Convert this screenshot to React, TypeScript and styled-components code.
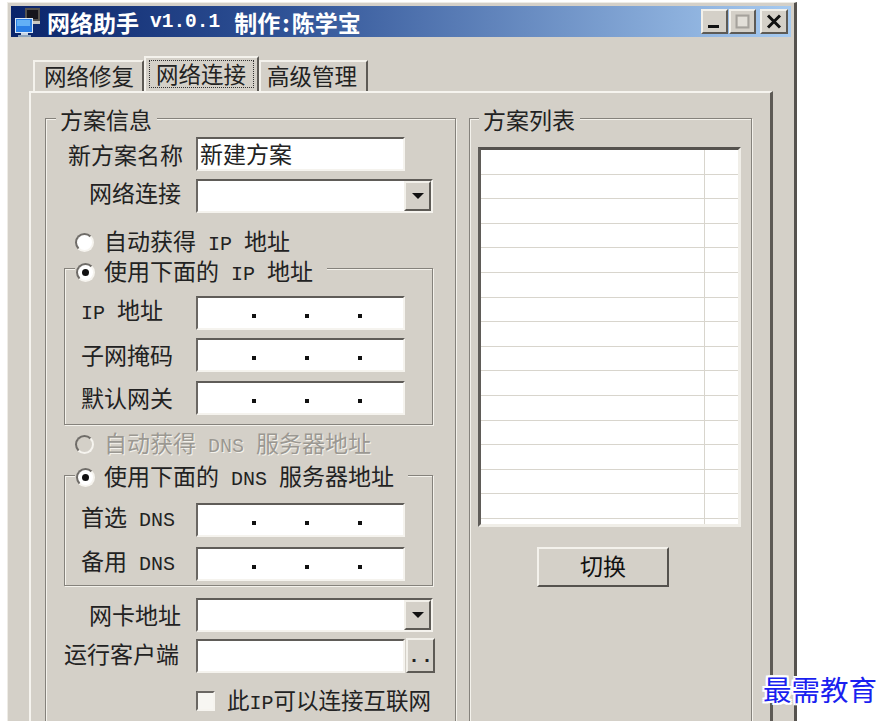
import React from "react";
import styled, { createGlobalStyle } from "styled-components";

const cjk = `"Noto Sans CJK SC", "Noto Sans", sans-serif`;
const mono = `"Liberation Mono", "Noto Sans CJK SC", monospace`;
const face = "#d4d0c8";

const Global = createGlobalStyle`
  html, body { margin: 0; padding: 0; background: #fff; overflow: hidden; }
  #root { height: 721px; overflow: hidden; position: relative; }
`;

const Window = styled.div`
  box-sizing: border-box;
  margin: 2px 0 0 7px;
  width: 790px;
  height: 740px;
  padding: 3px 3px 0 3px;
  background: ${face};
  border-top: 1px solid #eeece6;
  border-left: 1px solid #eeece6;
  border-right: 3px solid #55524e;
  font-family: ${cjk};
  font-size: 23px;
  line-height: 30px;
  color: #222;
`;

const TitleBar = styled.div`
  height: 31px;
  display: flex;
  align-items: center;
  padding: 0 3px 0 4px;
  background: linear-gradient(90deg, #0a246a 0%, #2f5296 35%, #a6caf0 100%);
  color: #fff;
  font-weight: 700;
`;

const IconSvg = styled.svg`
  flex: none;
  margin-top: 2px;
`;

const TitleText = styled.span`
  margin-left: 6px;
  display: flex;
  align-items: center;
  white-space: nowrap;
  line-height: 30px;
`;

const Version = styled.span`
  font-family: ${mono};
  font-size: 19.5px;
  margin: 0 14px 0 11px;
`;

const Colon = styled.span`
  margin: 0 2px;
`;

const TitleButtons = styled.div`
  margin-left: auto;
  display: flex;
  align-items: center;
`;

const CaptionButton = styled.div<{ $gap?: number; $w: number }>`
  box-sizing: border-box;
  width: ${(p) => p.$w}px;
  height: 25px;
  margin-left: ${(p) => p.$gap ?? 0}px;
  display: flex;
  align-items: center;
  justify-content: center;
  background: ${face};
  border: 2px solid;
  border-color: #f2f0ea #5d5a55 #5d5a55 #f2f0ea;
`;

const Tabs = styled.div`
  margin: 19px 0 0 22px;
  display: flex;
  align-items: flex-end;
  height: 35px;
  font-size: 22.5px;
`;

const Tab = styled.div<{ $w: number; $pad: number }>`
  box-sizing: border-box;
  height: 31px;
  width: ${(p) => p.$w}px;
  padding-left: ${(p) => p.$pad}px;
  background: ${face};
  border-top: 2px solid #f4f2ec;
  border-left: 2px solid #f4f2ec;
  border-right: 2px solid #5d5a55;
  line-height: 27px;
  white-space: nowrap;
`;

const ActiveTab = styled.div`
  box-sizing: border-box;
  height: 35px;
  width: 115px;
  padding: 2px 3px 3px 3px;
  background: ${face};
  border-top: 2px solid #f4f2ec;
  border-left: 2px solid #f4f2ec;
  border-right: 2px solid #5d5a55;
  white-space: nowrap;
`;

const TabFocus = styled.div`
  box-sizing: border-box;
  height: 100%;
  padding-left: 6px;
  border: 1px dotted #333;
  line-height: 24px;
`;

const Pane = styled.div`
  box-sizing: border-box;
  margin-left: 18px;
  width: 744px;
  height: 660px;
  padding: 25px 18px 0 14px;
  display: flex;
  gap: 13px;
  align-items: stretch;
  border-top: 2px solid #f6f4ef;
  border-left: 2px solid #f6f4ef;
  border-right: 3px solid #5d5a55;
`;

const Group = styled.div<{ $width?: number }>`
  box-sizing: border-box;
  flex: none;
  width: ${(p) => p.$width}px;
  height: 640px;
  border: 1px solid #85827c;
  box-shadow: 1px 1px 0 #f4f2ec, inset 1px 1px 0 #f4f2ec;
`;

const Legend = styled.div<{ $left: number }>`
  width: fit-content;
  height: 30px;
  line-height: 30px;
  margin: -15px 0 0 ${(p) => p.$left}px;
  padding: 0 5px 0 4px;
  background: ${face};
`;

const Row = styled.div<{ $top: number }>`
  display: flex;
  align-items: center;
  margin-top: ${(p) => p.$top}px;
`;

const RightLabel = styled.div<{ $trim?: number; $lift?: number }>`
  box-sizing: border-box;
  width: 150px;
  padding-right: ${(p) => 13 + (p.$trim ?? 0)}px;
  text-align: right;
  white-space: nowrap;
  position: relative;
  top: ${(p) => -(p.$lift ?? 0)}px;
`;

const Input = styled.div`
  box-sizing: border-box;
  width: 209px;
  height: 34px;
  background: #fff;
  border: 2px solid;
  border-color: #5f5c58 #f5f3ee #f5f3ee #6a6763;
  padding-left: 2px;
  line-height: 28px;
  white-space: nowrap;
`;

const IpInput = styled(Input)`
  display: flex;
  gap: 49px;
  align-items: center;
  padding: 6px 0 0 54px;
`;

const Dot = styled.i`
  display: block;
  width: 4px;
  height: 4px;
  background: #111;
`;

const Combo = styled.div`
  box-sizing: border-box;
  width: 237px;
  height: 34px;
  background: #fff;
  border: 2px solid;
  border-color: #5f5c58 #f5f3ee #f5f3ee #6a6763;
  display: flex;
  justify-content: flex-end;
`;

const DropButton = styled.div`
  box-sizing: border-box;
  width: 27px;
  height: 100%;
  background: ${face};
  border: 2px solid;
  border-color: #f2f0ea #5d5a55 #5d5a55 #f2f0ea;
  display: flex;
  align-items: center;
  justify-content: center;
`;

const Arrow = styled.i`
  display: block;
  border-left: 6px solid transparent;
  border-right: 6px solid transparent;
  border-top: 6px solid #111;
`;

const BrowseButton = styled.div`
  box-sizing: border-box;
  width: 29px;
  height: 35px;
  margin-left: 1px;
  background: ${face};
  border: 2px solid;
  border-color: #f2f0ea #5d5a55 #5d5a55 #f2f0ea;
  font-family: ${mono};
  font-size: 20px;
  font-weight: 700;
  line-height: 34px;
  text-align: center;
  letter-spacing: 1px;
`;

const RadioLine = styled.div<{ $top: number; $disabled?: boolean }>`
  display: flex;
  align-items: center;
  gap: 10px;
  height: 24px;
  line-height: 24px;
  margin: ${(p) => p.$top}px 0 0 29px;
  white-space: nowrap;
  color: ${(p) => (p.$disabled ? "#9b9892" : "inherit")};
  text-shadow: ${(p) => (p.$disabled ? "1px 1px 0 #f4f2ec" : "none")};
`;

const RadioCircle = styled.span<{ $disabled?: boolean }>`
  box-sizing: border-box;
  flex: none;
  width: 19px;
  height: 19px;
  border-radius: 50%;
  border: 2px solid;
  border-color: #6f6c68 #f6f4ef #f6f4ef #6f6c68;
  background: ${(p) => (p.$disabled ? face : "#fff")};
  display: flex;
  align-items: center;
  justify-content: center;
`;

const RadioDot = styled.i`
  display: block;
  width: 7px;
  height: 7px;
  border-radius: 50%;
  background: #111;
`;

const Word = styled.span<{ $flush?: boolean }>`
  font-family: ${mono};
  font-size: 20px;
  margin: 0 12px 0 ${(p) => (p.$flush ? 0 : 12)}px;
`;

const SubGroup = styled.div<{ $top: number; $bottom: number }>`
  box-sizing: border-box;
  width: 369px;
  margin: ${(p) => p.$top}px 0 0 18px;
  padding-bottom: ${(p) => p.$bottom}px;
  border: 1px solid #85827c;
  box-shadow: 1px 1px 0 #f4f2ec, inset 1px 1px 0 #f4f2ec;
`;

const SubLegend = styled.div<{ $lift: number }>`
  width: fit-content;
  display: flex;
  align-items: center;
  gap: 9px;
  height: 24px;
  line-height: 24px;
  margin: ${(p) => -p.$lift}px 0 0 10px;
  padding-right: 14px;
  padding-left: 1px;
  background: ${face};
  white-space: nowrap;
`;

const SubRow = styled.div<{ $top: number }>`
  display: flex;
  align-items: center;
  margin-top: ${(p) => p.$top}px;
  padding-left: 16px;
`;

const SubLabel = styled.div`
  width: 115px;
  white-space: nowrap;
  position: relative;
  top: -1px;
`;

const CheckRow = styled.div`
  display: flex;
  align-items: center;
  gap: 12px;
  margin: 17px 0 0 150px;
  height: 22px;
  white-space: nowrap;
`;

const CheckBox = styled.span`
  box-sizing: border-box;
  flex: none;
  width: 19px;
  height: 20px;
  background: #f7f6f2;
  border: 2px solid;
  border-color: #6a6763 #f6f4ef #f6f4ef #6a6763;
`;

const CheckText = styled.span`
  font-size: 22.5px;
`;

const CheckWord = styled.span`
  font-family: ${mono};
  font-size: 20px;
`;

const List = styled.div`
  box-sizing: border-box;
  width: 263px;
  height: 380px;
  margin: 13px 0 0 8px;
  background: #fff;
  border-top: 3px solid #55524e;
  border-left: 3px solid #5f5c58;
  border-right: 3px solid #f0eee8;
  border-bottom: 3px solid #f0eee8;
  overflow: hidden;
`;

const ListRow = styled.div`
  box-sizing: border-box;
  height: 24.6px;
  display: flex;
  border-bottom: 1px solid #d8d5cd;
`;

const ListCellMain = styled.div`
  flex: 1;
`;

const ListCellEnd = styled.div`
  width: 33px;
  border-left: 1px solid #d8d5cd;
`;

const PushButton = styled.div`
  box-sizing: border-box;
  width: 132px;
  height: 40px;
  margin: 20px 0 0 67px;
  background: ${face};
  border: 2px solid;
  border-color: #f4f2ec #55524e #55524e #f4f2ec;
  text-align: center;
  line-height: 32px;
  color: #111;
`;

const Watermark = styled.div`
  position: absolute;
  left: 763px;
  top: 669px;
  font-family: ${cjk};
  font-size: 28.5px;
  line-height: 40px;
  color: #1a1ff0;
  white-space: nowrap;
  text-shadow: 2px 0 0 #fff, -2px 0 0 #fff, 0 2px 0 #fff, 0 -2px 0 #fff, 2px 2px 0 #fff, -2px -2px 0 #fff, 2px -2px 0 #fff, -2px 2px 0 #fff;
`;

const AppIcon = () => (
  <IconSvg width="26" height="29" viewBox="0 0 26 29">
    <rect x="10" y="0" width="15" height="13" fill="#55524e" />
    <rect x="12" y="2" width="11" height="9" fill="#17161c" />
    <rect x="18" y="13" width="7" height="3" fill="#c9c6c0" />
    <rect x="0" y="10" width="18" height="15" fill="#dbe8f6" />
    <rect x="1" y="11" width="16" height="13" fill="#2b7fe6" />
    <rect x="2" y="12" width="13" height="6" fill="#63b0f6" />
    <rect x="6" y="25" width="7" height="2" fill="#c9d6e4" />
    <rect x="3" y="27" width="13" height="2" fill="#8ea4bb" />
  </IconSvg>
);

const Ip = () => (
  <IpInput>
    <Dot />
    <Dot />
    <Dot />
  </IpInput>
);

const rows = Array.from({ length: 16 }, (_, i) => i);

export default function App() {
  return (
    <>
      <Global />
      <Window>
        <TitleBar>
          <AppIcon />
          <TitleText>
            网络助手<Version>v1.0.1</Version>制作<Colon>:</Colon>陈学宝
          </TitleText>
          <TitleButtons>
            <CaptionButton $w={27}>
              <svg width="15" height="15" viewBox="0 0 15 15"><rect x="1" y="11" width="11" height="3" fill="#111" /></svg>
            </CaptionButton>
            <CaptionButton $w={27} $gap={1}>
              <svg width="15" height="15" viewBox="0 0 15 15"><rect x="1.5" y="1.5" width="12" height="12" fill="none" stroke="#a5a29c" strokeWidth="2" /><rect x="3" y="3" width="9" height="9" fill="#e2dfd8" /></svg>
            </CaptionButton>
            <CaptionButton $w={28} $gap={4}>
              <svg width="16" height="15" viewBox="0 0 16 15"><path d="M2 1.5 14 13.5M14 1.5 2 13.5" stroke="#111" strokeWidth="3" /></svg>
            </CaptionButton>
          </TitleButtons>
        </TitleBar>
        <Tabs>
          <Tab $w={111} $pad={9}>网络修复</Tab>
          <ActiveTab>
            <TabFocus>网络连接</TabFocus>
          </ActiveTab>
          <Tab $w={109} $pad={6}>高级管理</Tab>
        </Tabs>
        <Pane>
          <Group $width={411}>
            <Legend $left={10}>方案信息</Legend>
            <Row $top={3}>
              <RightLabel>新方案名称</RightLabel>
              <Input>新建方案</Input>
            </Row>
            <Row $top={8}>
              <RightLabel $trim={2} $lift={4}>网络连接</RightLabel>
              <Combo>
                <DropButton><Arrow /></DropButton>
              </Combo>
            </Row>
            <RadioLine $top={17}>
              <RadioCircle />
              <span>自动获得<Word>IP</Word>地址</span>
            </RadioLine>
            <SubGroup $top={14} $bottom={9}>
              <SubLegend $lift={9}>
                <RadioCircle><RadioDot /></RadioCircle>
                <span>使用下面的<Word>IP</Word>地址</span>
              </SubLegend>
              <SubRow $top={11}><SubLabel><Word $flush>IP</Word>地址</SubLabel><Ip /></SubRow>
              <SubRow $top={8}><SubLabel>子网掩码</SubLabel><Ip /></SubRow>
              <SubRow $top={9}><SubLabel>默认网关</SubLabel><Ip /></SubRow>
            </SubGroup>
            <RadioLine $top={7} $disabled>
              <RadioCircle $disabled />
              <span>自动获得<Word>DNS</Word>服务器地址</span>
            </RadioLine>
            <SubGroup $top={19} $bottom={4}>
              <SubLegend $lift={11}>
                <RadioCircle><RadioDot /></RadioCircle>
                <span>使用下面的<Word>DNS</Word>服务器地址</span>
              </SubLegend>
              <SubRow $top={13}><SubLabel>首选<Word>DNS</Word></SubLabel><Ip /></SubRow>
              <SubRow $top={9}><SubLabel>备用<Word>DNS</Word></SubLabel><Ip /></SubRow>
            </SubGroup>
            <Row $top={12}>
              <RightLabel $trim={2} $lift={1}>网卡地址</RightLabel>
              <Combo>
                <DropButton><Arrow /></DropButton>
              </Combo>
            </Row>
            <Row $top={6}>
              <RightLabel $trim={4} $lift={3}>运行客户端</RightLabel>
              <Input />
              <BrowseButton>..</BrowseButton>
            </Row>
            <CheckRow>
              <CheckBox />
              <CheckText>此<CheckWord>IP</CheckWord>可以连接互联网</CheckText>
            </CheckRow>
          </Group>
          <Group $width={283}>
            <Legend $left={9}>方案列表</Legend>
            <List>
              {rows.map((r) => (
                <ListRow key={r}>
                  <ListCellMain />
                  <ListCellEnd />
                </ListRow>
              ))}
            </List>
            <PushButton>切换</PushButton>
          </Group>
        </Pane>
      </Window>
      <Watermark>最需教育</Watermark>
    </>
  );
}
